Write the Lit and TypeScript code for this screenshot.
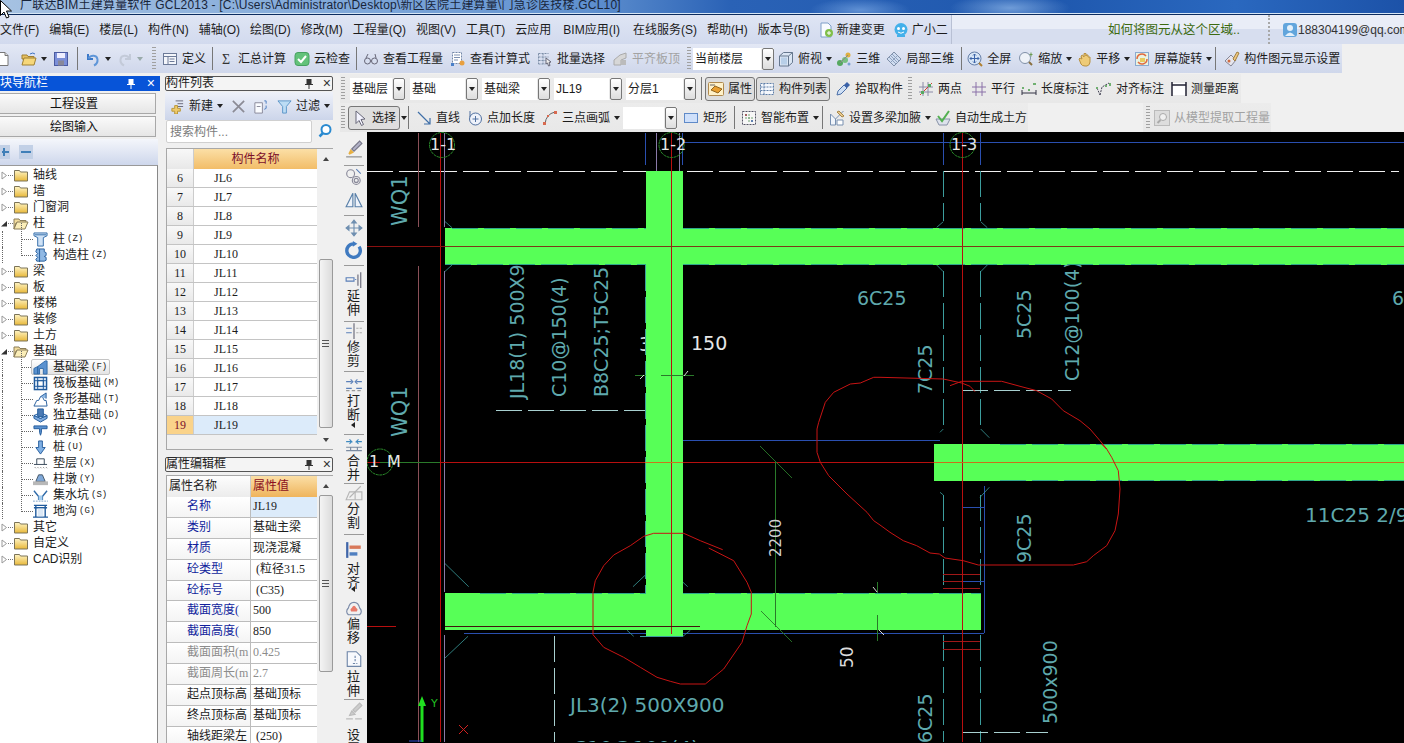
import { LitElement, html, css, svg } from "lit";
import { customElement } from "lit/decorators.js";

const I: Record<string, any> = {
  new: svg`<path d="M3 1.500h7l3 3v10H3z" fill="#fff" stroke="#777"/><path d="M10 1.500v3h3" fill="#ddd" stroke="#777"/>`,
  open: svg`<path d="M1 4h5l1 1.500h6V8H1z" fill="#e8c060" stroke="#a08030"/><path d="M1 14l2-7h12l-2 7z" fill="#f6d77a" stroke="#a08030"/><path d="M9 3q3-2 5 0" fill="none" stroke="#3a70c0"/>`,
  save: svg`<rect x="1.500" y="1.500" width="13" height="13" fill="#7b8fd8" stroke="#4a5aa0"/><rect x="4" y="2" width="8" height="5" fill="#eef"/><rect x="5" y="9.500" width="6" height="5" fill="#889"/>`,
  undo: svg`<path d="M3 3v5h5" fill="none" stroke="#3a78c8" stroke-width="2"/><path d="M3.500 7.500C6 3.500 12 4 12.500 8.500c.3 3-1.500 5-3.500 6" fill="none" stroke="#5f96d8" stroke-width="2"/>`,
  redo: svg`<path d="M13 3v5H8" fill="none" stroke="#c3cad8" stroke-width="2"/><path d="M12.500 7.500C10 3.500 4 4 3.500 8.500c-.3 3 1.500 5 3.500 6" fill="none" stroke="#c3cad8" stroke-width="2"/>`,
  def: svg`<rect x="1.500" y="2.500" width="13" height="11" fill="#f4f6fb" stroke="#6c7a98"/><path d="M1.500 5.500h13M6 5.500v8M7.500 8h5M7.500 10.500h5" stroke="#6c7a98" fill="none"/>`,
  sigma: svg`<text x="8" y="13" text-anchor="middle" font-size="14" font-family="Liberation Serif" fill="#333">Σ</text>`,
  cloud: svg`<rect x="1" y="1.500" width="14" height="13" rx="3" fill="#63c27a" stroke="#46a060"/><path d="M4 8l3 3 5-6" fill="none" stroke="#fff" stroke-width="2"/>`,
  glasses: svg`<circle cx="4.500" cy="10" r="3" fill="none" stroke="#667"/><circle cx="11.500" cy="10" r="3" fill="none" stroke="#667"/><path d="M7.500 10h1M3 7l2-4M13 7l-1-4" stroke="#667" fill="none"/>`,
  calc: svg`<rect x="2.500" y="1.500" width="9" height="11" fill="#fff" stroke="#7488a8" stroke-dasharray="2 1"/><path d="M4 4h6M4 6.500h6M4 9h4" stroke="#7c8fb0"/><rect x="1" y="12" width="3" height="3" fill="#4a80c8"/><circle cx="12" cy="12" r="2.500" fill="#e8a040"/>`,
  batch: svg`<path d="M1.500 2.500h10M1.500 6h10M1.500 9.500h7M1.500 13h7M1.500 2.500v10.500M6 2.500v10.500" stroke="#7d8fa8" fill="none" stroke-dasharray="2 1"/><path d="M9 7l5 4-2 .5 1 3-1.500.5-1-3-1.500 1z" fill="#eee" stroke="#667"/>`,
  flat: svg`<path d="M2 14V9l6-5 6-2v5l-5 2v5z" fill="#d7d7d7" stroke="#aaa"/><rect x="9" y="9" width="5" height="5" fill="#bbb"/>`,
  cube: svg`<path d="M1.500 5l4-3.500h9v10l-4 3.500h-9z" fill="#dbe6f4" stroke="#66788f"/><path d="M1.500 5h9v10M10.500 5l4-3.500" fill="none" stroke="#66788f"/><path d="M3 6.500h6v7H3z" fill="#b8cfe8"/>`,
  three: svg`<circle cx="12" cy="4" r="2.500" fill="#e0b040"/><circle cx="4" cy="12" r="3" fill="#56a860"/><circle cx="9" cy="9" r="3" fill="#78c080"/><path d="M4 12l8-8" stroke="#888"/><circle cx="13" cy="13" r="1.500" fill="#7aa0d0"/>`,
  part: svg`<path d="M8 1l7 7-7 7-7-7z" fill="#cfdcf0" stroke="#7f8fa8"/><path d="M4.500 4.500l7 7M11.500 4.500l-7 7M6 3l7 7M3 6l7 7" stroke="#8fa2bf" fill="none"/>`,
  full: svg`<circle cx="7.500" cy="7.500" r="6.500" fill="#d7e5f6" stroke="#667fa8"/><path d="M7.500 3v9M3 7.500h9" stroke="#3c64a8"/><path d="M6 4.500l1.500-1.500 1.500 1.500M6 10.500l1.500 1.500 1.500-1.500M4.500 6L3 7.500l1.500 1.500M10.500 6L12 7.500l-1.500 1.500" fill="none" stroke="#3c64a8"/><path d="M12 12l3 3" stroke="#b08030" stroke-width="2"/>`,
  zoom: svg`<circle cx="7" cy="7" r="5.500" fill="#eef2f8" stroke="#8090a8"/><path d="M11 11l3 3" stroke="#8a7040" stroke-width="2"/><path d="M13 1.500v4M11.500 3.500h3" stroke="#6a9a50"/>`,
  hand: svg`<path d="M3 8l2 5q1 2 4 2h2q3-1 3-4V6h-2V4h-2v1V2.500H8V6L6.500 4 5 5l1 3-2-1z" fill="#eecb78" stroke="#b89040"/>`,
  rot: svg`<rect x="1.500" y="1.500" width="13" height="13" fill="#eaf3e2" stroke="#8aaad0"/><path d="M3 8a5 5 0 0 1 9-3M13 8a5 5 0 0 1-9 3" fill="none" stroke="#e06a40" stroke-width="1.500"/><rect x="6" y="7" width="5" height="4" fill="#e8cc60"/>`,
  disp: svg`<path d="M1 10l6-6 5 5-5 6z" fill="#e6e6ee" stroke="#858595"/><path d="M9 8l4-7 2 1-4 8z" fill="#f0c880" stroke="#a07f40"/><circle cx="5" cy="10" r="1.500" fill="#d06a40"/>`,
  attr: svg`<rect x=".5" y="1.500" width="15" height="13" rx="1" fill="#fff1c8" stroke="#b08a50"/><path d="M3 9l4-4 7 3-4 4z" fill="#e89e30" stroke="#91641c"/><path d="M2 4h5" stroke="#666"/>`,
  list: svg`<path d="M1.500 2.500h13v11h-13zM5 2.500v11M1.500 6h13M1.500 9.500h13" fill="#f4f7fc" stroke="#5f7fa8" stroke-dasharray="2 1"/>`,
  pick: svg`<path d="M2 14l1-4 6-6 3 3-6 6z" fill="#cfe0f5" stroke="#4b6fa8"/><path d="M9 4l3-3 3 3-3 3z" fill="#3b62a8"/>`,
  two: svg`<path d="M1 6h14M1 11h14M5 1v14M10 1v14" stroke="#8a8aa8" fill="none"/><path d="M2 14L14 2" stroke="#d04030"/><rect x="3" y="10" width="3" height="3" fill="#58a860"/><rect x="10" y="3" width="3" height="3" fill="#58a860"/>`,
  par: svg`<path d="M1 6h14M1 11h14M5 1v14M11 1v14" stroke="#8a70a8" fill="none"/>`,
  len: svg`<path d="M1 9v5M15 9v5M1 12h14" fill="none" stroke="#334"/><rect x="1" y="6" width="2" height="2" fill="#70b070"/><rect x="7" y="8" width="2" height="2" fill="#70b070"/><rect x="12" y="2" width="3" height="2" fill="#70b070"/>`,
  ali: svg`<path d="M1 7l3 7M4 14l2-8 7-4" fill="none" stroke="#445" stroke-dasharray="2 1"/><rect x="0" y="6" width="2" height="2" fill="#70b070"/><rect x="13" y="2" width="2" height="3" fill="#70b070"/><rect x="9" y="4" width="2" height="2" fill="#70b070"/>`,
  mea: svg`<rect x="1" y="2" width="14" height="12" fill="#fff"/><path d="M1 1v14M15 1v14M1 4h14" fill="none" stroke="#223" stroke-width="1.500"/>`,
  cur: svg`<path d="M4 1l9 8-4 .5 2.500 5-2 1-2.500-5-3 3z" fill="#f4f4ff" stroke="#667"/>`,
  line: svg`<path d="M2 2l12 12M14 8v6H8" fill="none" stroke="#3f6fa8" stroke-width="1.200"/>`,
  pt: svg`<circle cx="8.500" cy="9" r="6" fill="#eef2fa" stroke="#5070a0"/><path d="M8.500 6v6M5.500 9h6" stroke="#5070a0"/><path d="M3 1v6" stroke="#5070a0"/>`,
  arc: svg`<path d="M3 14Q4 4 13 2" fill="none" stroke="#666"/><rect x="1" y="12" width="3" height="3" fill="#d86a50"/><rect x="12" y="1" width="3" height="3" fill="#d86a50"/><rect x="5" y="5" width="2" height="2" fill="#d86a50"/>`,
  rect: svg`<rect x="1.500" y="3.500" width="13" height="9" fill="#cfe0fa" stroke="#5f8ac8"/>`,
  smart: svg`<rect x="1.500" y="1.500" width="13" height="13" fill="#f7f7f7" stroke="#556" stroke-dasharray="2 1"/><path d="M8 4v8M4 8h8" stroke="#70a070" stroke-dasharray="2 1"/><rect x="4" y="4" width="2" height="2" fill="#a06060"/><rect x="10" y="10" width="2" height="2" fill="#6080b0"/>`,
  haunch: svg`<path d="M1.500 4l5 5v6H1.500zM14.500 1l-8 8" fill="#f0f4fa" stroke="#7890b0"/><path d="M8 10h6v5H8z" fill="#fff" stroke="#7890b0"/><path d="M10 1l5 5-2 1-5-5z" fill="#e8c890" stroke="#a88848"/>`,
  auto: svg`<path d="M1 9h14l-3 6H4z" fill="#dde2ec" stroke="#8892a8"/><path d="M3 6l4 5 7-10" fill="none" stroke="#52b050" stroke-width="2"/>`,
  model: svg`<rect x=".5" y=".5" width="15" height="15" fill="#ddd" stroke="#bbb"/><circle cx="9" cy="7" r="3.500" fill="#f0f0f0" stroke="#aaa"/><path d="M6.500 10l-3 3" stroke="#aaa" stroke-width="2"/>`,
  change: svg`<path d="M3 1h7l3 3v11H3z" fill="#f8fbff" stroke="#7f9fc8"/><circle cx="11" cy="11" r="4" fill="#80bf4a"/><path d="M9 11h4M11 9v4" stroke="#fff"/>`,
  ai: svg`<circle cx="8" cy="7.500" r="6.500" fill="#43b0ea"/><circle cx="5.500" cy="6.500" r="1.500" fill="#fff"/><circle cx="10.500" cy="6.500" r="1.500" fill="#fff"/><path d="M5 10q3 2.500 6 0" stroke="#fff" fill="none"/><path d="M4 14h8" stroke="#43b0ea" stroke-width="2"/>`,
  user: svg`<rect x="1" y="1" width="14" height="14" rx="3" fill="#62a5dc"/><circle cx="8" cy="6" r="3" fill="#e4f0fa"/><path d="M3 14q5-7 10 0z" fill="#e4f0fa"/>`,
  lnew: svg`<path d="M6 2h8M8 5h6M8 8h6" stroke="#667" fill="none"/><path d="M2 10h3V7h3v3h3v3H8v3H5v-3H2z" fill="#efca6a" stroke="#b79436"/>`,
  lx: svg`<path d="M2 2l12 12M14 2L2 14" stroke="#8b8b95" stroke-width="1.800"/>`,
  lcopy: svg`<path d="M2 4h8v11H2z" fill="#fafcff" stroke="#889"/><path d="M12 2h2v3M14 7v3l-2 1" fill="none" stroke="#4a7cc0"/><path d="M4 8h4" stroke="#889"/>`,
  filter: svg`<path d="M1 2h14l-5 6v7H6V8z" fill="#bcdcf4" stroke="#5a94c8"/>`,
  mag: svg`<circle cx="9" cy="6.500" r="4.500" fill="#fff" stroke="#2a8ad0" stroke-width="2"/><path d="M6 10l-3.500 3.500" stroke="#2a8ad0" stroke-width="2.500"/>`,
  brush: svg`<path d="M1 15h14" stroke="#888"/><path d="M3 12l2-4 3 3-4 2z" fill="#e8b040"/><path d="M6 8l7-7 2 2-7 7z" fill="#b3b3c8" stroke="#778"/>`,
  circ: svg`<circle cx="5" cy="5" r="3.500" fill="none" stroke="#8a8a9a"/><circle cx="10" cy="11" r="3.500" fill="none" stroke="#8a8a9a"/><circle cx="10" cy="11" r="1.800" fill="none" stroke="#8a8a9a"/><path d="M10 1l4 4" stroke="#5a7fb8"/>`,
  mir: svg`<path d="M7 2L1 14h6zM9 2l6 12H9z" fill="#eef3fa" stroke="#587fa8"/>`,
  move: svg`<path d="M8 1v14M1 8h14M8 1L6 3.500h4zM8 15l-2-2.500h4zM1 8l2.500-2v4zM15 8l-2.500-2v4z" fill="#6f8fb0" stroke="#6f8fb0"/>`,
  rota: svg`<path d="M12.500 5a6 6 0 1 1-5-2.500" fill="none" stroke="#3f7ac0" stroke-width="3"/><path d="M7 0v5l4-2.500z" fill="#3f7ac0"/>`,
  ext: svg`<path d="M14 1v14M11.500 3v10" stroke="#667" fill="none"/><path d="M1 6h7v3H1z" fill="none" stroke="#5a7fb8"/><path d="M9 7.500h2" stroke="#5a7fb8" stroke-dasharray="1 1"/>`,
  trim: svg`<path d="M8 1v14" stroke="#667"/><path d="M1 5.500h5M1 9.500h5" stroke="#5a7fb8"/><path d="M10 5.500h5M10 9.500h5" stroke="#aaa" stroke-dasharray="2 1"/>`,
  brk: svg`<path d="M1 5h5M10 5h5" stroke="#5a7fb8"/><path d="M1 11h5M10 11h5" stroke="#5a7fb8"/><path d="M5 3l2 2-2 2M11 3L9 5l2 2" fill="none" stroke="#5a7fb8"/><path d="M1 13h14" stroke="#999" stroke-dasharray="3 2"/>`,
  mer: svg`<path d="M1 5h5l-2-2M4 7l2-2M15 5h-5l2-2M12 7l-2-2" fill="none" stroke="#3f8ac0"/><path d="M1 10h14M1 13h14M5 10v3M11 10v3" stroke="#7a8aa0"/>`,
  spl: svg`<path d="M1 14l3-7h11v7z" fill="none" stroke="#b5b5b5"/><path d="M4 12L14 2" stroke="#b5b5b5"/><path d="M9 7v7" stroke="#b5b5b5"/>`,
  alg: svg`<path d="M2 1v14" stroke="#3f65a8" stroke-width="2"/><path d="M4 4h10v3H4z" fill="#d8785a"/><path d="M4 10h7v3H4z" fill="#4f7fc0"/>`,
  off: svg`<path d="M3 14q-3-3 0-6 1-5 5-5t5 5q3 3 0 6z" fill="none" stroke="#7a8aa8"/><path d="M5.500 11q-1.500-2 .5-3 1-2 2-2t2 2q2 1 .5 3z" fill="#e87a6a"/>`,
  str: svg`<path d="M2 1.500h8l4 4v9H2z" fill="#f7f9fd" stroke="#6f86a8"/><path d="M7 12h4M9 5v6" stroke="#6f86a8" stroke-dasharray="2 1"/>`,
  setg: svg`<path d="M1 15h6M9 15h6" stroke="#bbb"/><path d="M4 12l2-4 3 3zM7 7l6-6 2 2-6 6z" fill="#ccc" stroke="#bbb"/>`,
  tz: svg`<path d="M1 1h14v3l-4 2v9H5V6L1 4z" fill="#cfe2f6" stroke="#2f6aa8"/><path d="M2 3h12" stroke="#2f6aa8"/>`,
  tg: svg`<path d="M4 1h8v3l2 1v3l-2 1 2 1v3l-2 1H4l-1-2 2-2-2-2 2-2-2-2z" fill="#8fb8e4" stroke="#245c9c"/><path d="M7 1v14" stroke="#245c9c"/>`,
  tb: svg`<path d="M1 15V9l4-2v8zM5 15V7L13 1h2v14h-4V9H7v6z" fill="#5b92d0" stroke="#2f6aa8"/>`,
  tf: svg`<rect x="1.500" y="1.500" width="13" height="13" fill="#dbe8f6" stroke="#1f5a9c" stroke-width="1.500"/><rect x="5" y="5" width="6" height="6" fill="#fff" stroke="#1f5a9c"/><path d="M5 1.500v13M11 1.500v13M1.500 5h13M1.500 11h13" stroke="#1f5a9c"/>`,
  tt: svg`<path d="M1 15l3-6h2l2-4h2l2 4h2l1 6z" fill="#fff" stroke="#245c9c"/><path d="M8 5L14 1v6" fill="#8fb8e4" stroke="#245c9c"/>`,
  td: svg`<path d="M1 8l7 3 7-3v3l-7 4-7-4z" fill="#7eaade" stroke="#1f5a9c"/><path d="M1 8l7-3 7 3-7 3z" fill="#d8e8f8" stroke="#1f5a9c"/><path d="M5 1h6v8H5z" fill="#4a7ab4" stroke="#1f5a9c"/>`,
  tc: svg`<path d="M1 2h14v3H9v4l-1 3-1-3V5H1z" fill="#5a92d0" stroke="#245c9c"/>`,
  tu: svg`<path d="M6 1h4v7h3l-5 7-5-7h3z" fill="#7fb0e4" stroke="#245c9c"/>`,
  tx: svg`<path d="M4 9V3h8v6M1 9h14" fill="#fff" stroke="#345"/><path d="M2 12l1 1M5 12l1 1M8 12l1 1M11 12l1 1M14 12l1 1" stroke="#666"/>`,
  ty: svg`<path d="M6 3h4l3 7H3z" fill="#7fa8d8" stroke="#456"/><rect x="0" y="10" width="16" height="4" fill="#b8b8b8"/>`,
  ts: svg`<path d="M1 3l5 6v3h4V9l5-6" fill="none" stroke="#2f6aa8" stroke-width="1.500"/><rect x="6" y="8" width="4" height="5" fill="#a8cff0"/><path d="M0 14h16" stroke="#7aa0c8" stroke-dasharray="2 1"/>`,
  tdg: svg`<path d="M1 1.500h14M3 1.500v12M13 1.500v12M0 14h16M1 4h14" stroke="#1f5a9c" fill="none" stroke-width="1.500"/><rect x="5" y="5" width="6" height="8" fill="#dbe8f6"/>`,
};

const ic = (n: string) => html`<svg class="ic" viewBox="0 0 16 16">${I[n]}</svg>`;

type It = { k?: string; i?: string; l?: string; a?: boolean; g?: boolean; m?: number; w?: number; on?: boolean };

const rowA: It[] = [
  { i: "new", m: -5 }, { i: "open", m: 10, a: true }, { i: "save", m: 6 }, { k: "sep", m: 8 },
  { i: "undo", m: 7, a: true }, { i: "redo", m: 6, g: true, a: true },
];
const rowB: It[] = [
  { k: "grip", m: 0 }, { i: "def", l: "定义", m: 6 }, { k: "sep", m: 6 }, { i: "sigma", l: "汇总计算", m: 5 },
  { i: "cloud", l: "云检查", m: 8 }, { k: "sep", m: 6 }, { i: "glasses", l: "查看工程量", m: 6 },
  { i: "calc", l: "查看计算式", m: 7 }, { i: "batch", l: "批量选择", m: 7 }, { i: "flat", l: "平齐板顶", m: 7, g: true },
  { k: "grip", m: 7 }, { k: "combo", l: "当前楼层", m: 2, w: 81 }, { i: "cube", l: "俯视", m: 4, a: true },
  { i: "three", l: "三维", m: 4 }, { i: "part", l: "局部三维", m: 6 }, { k: "sep", m: 7 },
  { i: "full", l: "全屏", m: 5 }, { i: "zoom", l: "缩放", m: 7, a: true }, { i: "hand", l: "平移", m: 4, a: true },
  { i: "rot", l: "屏幕旋转", m: 4, a: true }, { k: "sep", m: 3 }, { i: "disp", l: "构件图元显示设置", m: 8 },
];
const row2: It[] = [
  { k: "grip", m: 1 }, { k: "combo", l: "基础层", m: 5, w: 55 }, { k: "combo", l: "基础", m: 5, w: 68 },
  { k: "combo", l: "基础梁", m: 4, w: 68 }, { k: "combo", l: "JL19", m: 4, w: 68 }, { k: "combo", l: "分层1", m: 4, w: 70 },
  { k: "sep", m: 5 }, { i: "attr", l: "属性", m: 3, on: true }, { i: "list", l: "构件列表", m: 1, on: true },
  { i: "pick", l: "拾取构件", m: 5 }, { k: "grip", m: 5 }, { i: "two", l: "两点", m: 6 }, { i: "par", l: "平行", m: 9 },
  { i: "len", l: "长度标注", m: 6 }, { i: "ali", l: "对齐标注", m: 7 }, { i: "mea", l: "测量距离", m: 7 },
];
const row3: It[] = [
  { k: "grip", m: 1 }, { i: "cur", l: "选择", m: 3, on: true }, { k: "arrow", m: 1 }, { k: "sep", m: 1 },
  { i: "line", l: "直线", m: 7 }, { i: "pt", l: "点加长度", m: 7 }, { i: "arc", l: "三点画弧", m: 7, a: true },
  { k: "combo", l: "", m: 3, w: 54 }, { i: "rect", l: "矩形", m: 6 }, { k: "sep", m: 7 },
  { i: "smart", l: "智能布置", m: 6, a: true }, { k: "sep", m: 3 }, { i: "haunch", l: "设置多梁加腋", m: 6, a: true },
  { i: "auto", l: "自动生成土方", m: 4 },
];

const menus = ["文件(F)", "编辑(E)", "楼层(L)", "构件(N)", "辅轴(O)", "绘图(D)", "修改(M)", "工程量(Q)", "视图(V)", "工具(T)", "云应用", "BIM应用(I)", "在线服务(S)", "帮助(H)", "版本号(B)"];

type T = { l: string; hk?: string; i?: string; open?: boolean; on?: boolean };
const tree: T[] = [
  { l: "轴线" }, { l: "墙" }, { l: "门窗洞" }, { l: "柱", open: true },
  { l: "柱", hk: "(Z)", i: "tz" }, { l: "构造柱", hk: "(Z)", i: "tg" },
  { l: "梁" }, { l: "板" }, { l: "楼梯" }, { l: "装修" }, { l: "土方" }, { l: "基础", open: true },
  { l: "基础梁", hk: "(F)", i: "tb", on: true }, { l: "筏板基础", hk: "(M)", i: "tf" }, { l: "条形基础", hk: "(T)", i: "tt" },
  { l: "独立基础", hk: "(D)", i: "td" }, { l: "桩承台", hk: "(V)", i: "tc" }, { l: "桩", hk: "(U)", i: "tu" },
  { l: "垫层", hk: "(X)", i: "tx" }, { l: "柱墩", hk: "(Y)", i: "ty" }, { l: "集水坑", hk: "(S)", i: "ts" }, { l: "地沟", hk: "(G)", i: "tdg" },
  { l: "其它" }, { l: "自定义" }, { l: "CAD识别" },
];

const rowsList = [6, 7, 8, 9, 10, 11, 12, 13, 14, 15, 16, 17, 18, 19];
const props: [string, string, string][] = [
  ["名称", "JL19", "b"], ["类别", "基础主梁", "b"], ["材质", "现浇混凝", "b"], ["砼类型", " (粒径31.5", "b"], ["砼标号", " (C35)", "b"],
  ["截面宽度(", "500", "b"], ["截面高度(", "850", "b"], ["截面面积(m", "0.425", "g"], ["截面周长(m", "2.7", "g"],
  ["起点顶标高", "基础顶标", "k"], ["终点顶标高", "基础顶标", "k"], ["轴线距梁左", " (250)", "k"],
];

type S = { m: number; i?: string; t?: string; tm?: number; arrow?: boolean; am?: number };
const strip: S[] = [
  { m: 8, i: "brush" }, { m: 7 }, { m: 2, i: "circ" }, { m: 5, i: "mir" }, { m: 6 }, { m: 3, i: "move" }, { m: 4, i: "rota" }, { m: 6 },
  { m: 5, i: "ext", t: "延伸" }, { m: 4 }, { m: 0, i: "trim", t: "修剪" }, { m: 3 }, { m: 4, i: "brk", t: "打断", arrow: true }, { m: 6 },
  { m: 1, i: "mer", t: "合并" }, { m: 1 }, { m: 0, i: "spl", t: "分割" }, { m: 4 }, { m: 6, i: "alg", t: "对齐", tm: 3, arrow: true, am: -4 },
  { m: 7, i: "off", t: "偏移" }, { m: 5, i: "str", t: "拉伸", tm: 2 }, { m: 1 }, { m: 2, i: "setg", t: "设置", tm: 8 },
];

const hl = (y: number, a: number, b: number, c: string, d?: string) => svg`<line x1=${a} x2=${b} y1=${y} y2=${y} stroke=${c} stroke-dasharray=${d || "none"}/>`;
const vl = (x: number, a: number, b: number, c: string, d?: string) => svg`<line x1=${x} x2=${x} y1=${a} y2=${b} stroke=${c} stroke-dasharray=${d || "none"}/>`;
const seg = (a: number, b: number, c: number, d: number, col = "#3a9a9a") => svg`<line x1=${a} y1=${b} x2=${c} y2=${d} stroke=${col}/>`;
const vt = (s: string, x: number, y: number, size = 19, fill = "#5fa9ad") => svg`<text transform="translate(${x},${y}) rotate(-90)" font-size=${size} fill=${fill}>${s}</text>`;
const ht = (s: string, x: number, y: number, size = 19, fill = "#5fa9ad") => svg`<text x=${x} y=${y} font-size=${size} fill=${fill}>${s}</text>`;

const map = (ox: number, oy: number, a: number[][]) => a.map(([x, y]) => `${(ox + x / 3).toFixed(1)},${(oy + y / 3).toFixed(1)}`);
const redA = [
  ...map(367, 430, [[1067, 362], [1000, 335], [950, 313], [860, 313], [830, 322], [790, 350], [740, 378], [710, 410], [685, 455], [678, 490], [678, 617], [710, 655], [770, 685], [820, 715], [870, 745], [910, 757], [940, 765], [1015, 765], [1070, 720], [1125, 640], [1140, 590], [1153, 555], [1153, 490], [1140, 460], [1100, 395], [1025, 357]]),
].join(" ");
const redB = [
  ...map(880, 130, [[210, 770], [245, 757], [365, 757], [420, 772], [470, 785], [515, 810], [550, 845], [600, 875], [630, 900], [660, 935], [680, 960]]),
  ...map(880, 430, [[665, 45], [680, 60], [695, 85], [715, 125], [720, 180], [715, 255], [705, 305], [680, 350], [640, 380], [620, 398], [580, 408], [295, 408], [250, 395], [195, 387], [178, 375], [150, 372], [110, 350], [70, 335], [30, 310], [0, 288]]),
  ...map(367, 430, [[1520, 275], [1500, 250], [1440, 195], [1385, 140], [1360, 100], [1350, 70], [1350, 0]]),
  ...map(367, 130, [[1355, 880], [1375, 820], [1400, 790], [1450, 765], [1480, 762], [1520, 745]]),
  ...map(880, 130, [[0, 745], [190, 750], [245, 762], [270, 772], [285, 788]]),
].join(" ");

const TEAL = "#3c9d9d", D = "26 6", BL = "#2a4fb0", RD = "#b80f0f", PV = "#8a7aa8", PR = "#8a5058", GD = "#2a7a2a";

@customElement("app-root")
export class AppRoot extends LitElement {
  static styles = css`
    :host { display: block; width: 1404px; height: 743px; overflow: hidden; position: relative; background: #f0f0f0; color: #1c1c1c;
      font: 12px/16px "Liberation Sans", "Noto Sans CJK SC", sans-serif; }
    * { box-sizing: border-box; }
    .ic { width: 16px; height: 16px; flex: none; display: block; }
    .title { height: 15px; overflow: hidden; padding-left: 20px; line-height: 10px; white-space: nowrap; color: #18253a; letter-spacing: .2px;
      border-bottom: 1px solid #0c2c60; box-shadow: inset 0 -1px 0 #d6e6f6;
      background: radial-gradient(ellipse 60px 14px at 1010px 8px, #6f9cd8, transparent), radial-gradient(ellipse 50px 12px at 860px 10px, #5f90d4, transparent), linear-gradient(90deg, #a6c2e2, #7aa4d8 28%, #5f90cf 42%, #2a62b6 52%, #1f58ae 75%, #2a68bf 88%, #1c52a8); }
    .cursor { position: absolute; left: 0; top: 0; width: 12px; height: 20px; }
    .menu { height: 29px; display: flex; background: linear-gradient(#dfe5f4, #d2daee); }
    .mleft { width: 952px; display: flex; align-items: center; gap: 10px; border-right: 1px solid #b8c0d4; padding-top: 1px; }
    .mi { display: flex; align-items: center; gap: 3px; white-space: nowrap; }
    .mi:nth-child(12) { margin-left: 2px; }
    .mi:nth-child(13) { margin-left: 3px; }
    .mi:nth-child(16) { margin-left: -2px; }
    .mi.x { margin-left: -2px; }
    .mtip { width: 318px; color: #3c6a10; padding: 7px 0 0 156px; background: linear-gradient(#e9edf7 50%, #d7deef 50%); border-right: 2px dotted #a8a8a8; white-space: nowrap; font-size: 12.5px; }
    .muser { flex: 1; display: flex; align-items: center; gap: 0; padding-left: 12px; white-space: nowrap; overflow: hidden; background: linear-gradient(#e9edf7 50%, #d7deef 50%); }
    .muser .t { color: #333; }
    .row { display: flex; align-items: center; height: 29px; white-space: nowrap; }
    .r1 { width: 1342px; background: linear-gradient(#e3e8f5, #cfd7eb); }
    .ga { width: 150px; margin-right: 2px; height: 100%; display: flex; align-items: center; flex: none; }
    .gb { flex: 1; height: 100%; display: flex; align-items: center; }
    .b { display: flex; align-items: center; gap: 4px; flex: none; }
    .b.g { color: #a2a2a2; }
    .b.g .ar { border-top-color: #9aa; }
    .b.on { height: 24px; padding: 0 2px; border: 1px solid #767676; border-radius: 3px; background: #dedede; }
    .r3 .b.on { padding: 0 3px; }
    .ar { width: 0; height: 0; border: 3px solid transparent; border-top: 4px solid #222; border-bottom: 0; flex: none; }
    .sep { width: 1px; height: 23px; background: #777; flex: none; }
    .grip { width: 4px; height: 23px; flex: none; background: repeating-linear-gradient(#a0a0a0 0 1px, transparent 1px 3px); }
    .combo { height: 22px; display: flex; background: #fff; flex: none; align-items: center; padding-left: 2px; overflow: hidden; justify-content: space-between; }
    .dd { width: 12px; height: 22px; border: 1px solid #777; border-radius: 2px; background: linear-gradient(#fff, #ddd); display: flex; align-items: center; justify-content: center; flex: none; box-shadow: -1px 0 0 #e8e8e8; }
    .main { display: flex; height: 670px; }
    .nav { width: 160px; margin-right: 5px; flex: none; padding-top: 3px; overflow: hidden; display: flex; flex-direction: column; }
    .nh { height: 15px; background: #0754d8; color: #fff; display: flex; align-items: center; justify-content: space-between; padding-right: 5px; line-height: 15px; }
    .pin { display: flex; gap: 12px; align-items: center; font-size: 14px; font-weight: 300; }
    .pin svg { width: 8px; height: 10px; }
    .nb { height: 21px; margin: 2px 4px 0 -8px; border: 1px solid #a8a8a8; background: linear-gradient(#fafafa, #e6e6e6); text-align: center; line-height: 21px; color: #111; }
    .nt { height: 26px; margin: 2px 2px 0 0; background: linear-gradient(#f4f6fb, #ced7ec); display: flex; align-items: center; gap: 9px; padding-left: 0; }
    .nt span { height: 14px; background: #c2d0e6; position: relative; flex: none; }
    .nt .p { width: 10px; }
    .nt .mn { width: 14px; }
    .nt .p::before, .nt .mn::before { content: ""; position: absolute; left: 2px; right: 1px; top: 6px; height: 2px; background: #3f7fb8; }
    .nt .mn::before { left: 2px; right: 2px; }
    .nt .p::after { content: ""; position: absolute; left: 3px; top: 3px; height: 8px; width: 2px; background: #3f7fb8; }
    .tree { flex: 1; margin-right: 2px; background: #fff; border-right: 1px solid #888; border-top: 1px solid #999; padding-top: 1px; }
    .tr { height: 16px; display: flex; align-items: center; position: relative; white-space: nowrap; }
    .tog { width: 13px; flex: none; display: flex; padding-left: 1px; }
    .tog svg { width: 7px; height: 9px; }
    .fo { width: 16px; height: 13px; flex: none; margin-right: 4px; }
    .root::before { content: ""; position: absolute; left: 8px; width: 5px; top: 8px; border-top: 1px dotted #777; }
    .ch { padding-left: 33px; }
    .ch::before { content: ""; position: absolute; left: 21px; width: 11px; top: -8px; height: 16px; border-left: 1px dotted #666; border-bottom: 1px dotted #666; }
    .ch::after { content: ""; position: absolute; left: 2px; top: 0; height: 16px; border-left: 1px dotted #666; }
    .ch .ic { width: 15px; height: 15px; margin-right: 5px; position: relative; z-index: 1; }
    .ch.on .lb { position: relative; z-index: 1; }
    .hlbox { position: absolute; left: 31px; top: 0; width: 79px; height: 16px; border: 1px solid #c4c4c4; border-radius: 2px; background: linear-gradient(#fff, #e4e4e4); }
    .hk { font: 9px/14px "Liberation Mono", monospace; margin-left: 2px; }
    .lp { width: 170px; flex: none; padding-top: 3px; display: flex; flex-direction: column; overflow: hidden; margin-right: 5px; }
    .lp > * { flex: none; }
    .ph { height: 15px; border: 1px solid #555; border-radius: 2px; display: flex; align-items: center; justify-content: space-between; padding: 0 1px 0 0; width: 168px; line-height: 13px; background: #f4f4f4; }
    .ph .pin { color: #333; gap: 10px; }
    .lt { height: 28px; width: 168px; margin-top: 1px; background: linear-gradient(#eef1f9, #ccd5ea); display: flex; align-items: center; padding-left: 5px; }
    .lt .ic { width: 15px; height: 15px; }
    .srch { height: 28px; display: flex; align-items: flex-start; width: 168px; }
    .srch .in { width: 146px; margin-left: 1px; height: 23px; background: #fff; border: 1px solid #d0d0d0; border-radius: 2px; color: #7c7c7c; padding: 3px 0 0 3px; }
    .srch .ic { margin: 3px 0 0 5px; }
    .grid { display: flex; margin-left: 1px; width: 167px; border: 1px solid #a8a8a8; background: #f0f0f0; font-family: "Liberation Serif", "Noto Sans CJK SC", serif; }
    .tbl { width: 150px; flex: none; }
    .lg { height: 302px; }
    .lh { height: 20px; display: flex; }
    .corner { width: 27px; background: linear-gradient(#f8f8f8, #e8e8e8); flex: none; border-right: 1px solid #ccc; }
    .hname { flex: 1; background: linear-gradient(#fbdfa6, #f2bd68); color: #7c0f2a; text-align: center; line-height: 20px; font-family: "Liberation Sans", "Noto Sans CJK SC", sans-serif; }
    .lr { height: 19px; display: flex; line-height: 18px; border-bottom: 1px solid #c4c4c4; background: #fff; }
    .idx { width: 27px; flex: none; background: linear-gradient(#f8f8f8, #e9e9e9); border-right: 1px solid #ccc; text-align: center; }
    .nm { padding-left: 20px; flex: 1; }
    .lr.sel { background: #dcebfa; }
    .lr.sel .idx { background: #fad38a; color: #7c0f2a; }
    .sb { width: 15px; margin-left: 1px; display: flex; flex-direction: column; align-items: center; background: #f0f0f0; flex: none; position: relative; }
    .up, .down { height: 19px; flex: none; display: flex; align-items: center; justify-content: center; }
    .up::before { content: ""; border: 3px solid transparent; border-bottom: 4px solid #444; border-top: 0; }
    .down::before { content: ""; border: 3px solid transparent; border-top: 4px solid #444; border-bottom: 0; }
    .thumb { width: 14px; border: 1px solid #9a9a9a; border-radius: 2px; background: linear-gradient(90deg, #f4f4f4, #dcdcdc); display: flex; align-items: center; justify-content: center; flex: none; }
    .thumb::before { content: ""; width: 7px; height: 7px; background: repeating-linear-gradient(#555 0 1px, transparent 1px 3px); }
    .th1 { height: 169px; margin-top: 91px; }
    .th2 { height: 177px; }
    .spacer { flex: 1; }
    .ph2 { margin-top: 7px; }
    .pg { margin-top: 3px; height: 280px; }
    .ph3 { height: 21px; display: flex; font-family: "Liberation Sans", "Noto Sans CJK SC", sans-serif; }
    .pn { width: 84px; padding-left: 2px; flex: none; background: linear-gradient(#fdfdfd, #ececec); border-right: 1px solid #ccc; line-height: 21px; }
    .pv { flex: 1; background: linear-gradient(#fbdfa6, #efb45c); color: #8c1020; line-height: 21px; padding-left: 2px; }
    .prow { height: 20.9px; display: flex; border-bottom: 1px solid #bcbcbc; background: #fff; line-height: 19px; }
    .prow .a { width: 84px; flex: none; padding-left: 20px; border-right: 1px solid #bcbcbc; white-space: nowrap; overflow: hidden; background: linear-gradient(#fff, #f4f4f4); }
    .prow .v { flex: 1; padding-left: 2px; white-space: pre; overflow: hidden; }
    .prow.b2 .a { color: #101e9c; }
    .prow.g2 .a, .prow.g2 .v { color: #8c8c8c; }
    .prow.first .v { background: #dcebfa; }
    .right { flex: 1; display: flex; flex-direction: column; min-width: 0; }
    .r2 { margin-top: 1px; }
    .r2 .tb, .r3 .tb { height: 100%; display: flex; align-items: center; background: linear-gradient(#ececec, #e8e8e8); }
    .r2 .tb { width: 901px; }
    .r3 .tb { width: 688px; }
    .r3 .tb2 { width: 128px; margin-left: 115px; padding-left: 3px; }
    .canvas { flex: 1; display: flex; min-height: 0; }
    .strip { width: 27px; flex: none; display: flex; flex-direction: column; align-items: center; overflow: hidden; }
    .sline { height: 1px; width: 20px; background: #9a9a9a; flex: none; }
    .sitem { display: flex; flex-direction: column; align-items: center; flex: none; }
    .sitem .ic { height: 18px; width: 18px; }
    .vtxt { width: 13px; line-height: 14px; text-align: center; font-size: 13px; }
    .sar { width: 0; height: 0; border: 3px solid transparent; border-right: 4px solid #222; border-left: 0; margin: 0 0 0 -1px; }
    .cv { flex: 1; min-width: 0; background: #000; display: block; }
    .cv svg { display: block; }
    .cv text { font-family: "DejaVu Sans", sans-serif; }
  `;

  private item(x: It) {
    const m = `margin-left:${x.m ?? 0}px`;
    if (x.k === "sep") return html`<div class="sep" style=${m}></div>`;
    if (x.k === "arrow") return html`<div class="ar" style=${m}></div>`;
    if (x.k === "grip") return html`<div class="grip" style=${m}></div>`;
    if (x.k === "combo")
      return html`<div class="combo" style="${m};width:${x.w}px"><span>${x.l}</span><span class="dd"><span class="ar"></span></span></div>`;
    return html`<div class="b ${x.g ? "g" : ""} ${x.on ? "on" : ""}" style=${m}>
      ${ic(x.i!)}${x.l ? html`<span>${x.l}</span>` : ""}${x.a ? html`<span class="ar"></span>` : ""}
    </div>`;
  }

  private pin() {
    return html`<span class="pin"><svg viewBox="0 0 8 10"><path d="M1.500 0h5v5H8v1H4.500v4h-1V6H0V5h1.500z" fill="currentColor"/></svg><span>×</span></span>`;
  }

  private folder(open?: boolean) {
    return open
      ? html`<svg class="fo" viewBox="0 0 16 13"><path d="M1 2h5l1 1.500h6V6H3L1 12z" fill="#f2dc9c" stroke="#8a7d58"/><path d="M1 12l3-7h11l-3 7z" fill="#fbeeb8" stroke="#8a7d58"/></svg>`
      : html`<svg class="fo" viewBox="0 0 16 13"><defs><linearGradient id="fg" x1="0" y1="0" x2="0" y2="1"><stop offset="0" stop-color="#fff4c4"/><stop offset="1" stop-color="#e8b83a"/></linearGradient></defs><path d="M1.500 1.500h5l1 1.500h7v9h-13z" fill="url(#fg)" stroke="#7c7458"/></svg>`;
  }

  private treeRow(t: T) {
    if (t.i)
      return html`<div class="tr ch ${t.on ? "on" : ""}">
        ${t.on ? html`<div class="hlbox"></div>` : ""}${ic(t.i)}<span class="lb">${t.l}</span><span class="hk lb">${t.hk}</span>
      </div>`;
    return html`<div class="tr root">
      <span class="tog"><svg viewBox="0 0 7 9">${t.open ? svg`<path d="M0 7.500L6 2v5.500z" fill="#333"/>` : svg`<path d="M1 1l4.500 3.500L1 8z" fill="#fff" stroke="#999"/>`}</svg></span>
      ${this.folder(t.open)}<span>${t.l}</span>
    </div>`;
  }

  private canvas() {
    return html`<svg width="1037" height="610" viewBox="367 133 1037 610">
      ${ht("JL3(2) 500X900", 570, 713, 20)}${ht("C10@100(4)", 573, 756, 20)}${ht("11C25 2/9", 1305, 523, 20)}
      ${ht("6C25", 857, 306)}${ht("6", 1392, 306)}
      ${vt("WQ1", 407, 227, 21)}${vt("WQ1", 407, 438, 21)}
      ${vt("JL18(1) 500X900", 524, 400)}${vt("C10@150(4)", 566, 398)}${vt("B8C25;T5C25", 608, 398)}
      ${vt("7C25", 932, 395)}${vt("5C25", 1031, 340)}${vt("C12@100(4)", 1079, 382)}${vt("9C25", 1031, 564)}${vt("500x900", 1057, 725)}${vt("6C25", 932, 744)}
      ${ht("350", 639, 352, 19, "#ddd")}
      <g shape-rendering="crispEdges" fill="none">
        ${hl(172.5, 367, 1399, "#f0f0f0", D)}
        ${hl(143.5, 682, 1404, BL)}${hl(441.5, 683, 940, BL)}
        ${vl(418.5, 134, 228, PR)}${vl(418.5, 267, 743, PR)}
        ${vl(444.5, 134, 228, PV)}${vl(444.5, 272, 593, PV)}${vl(444.5, 636, 743, PV)}
        ${vl(645.5, 134, 166, BL)}${vl(682.5, 134, 166, BL)}${vl(656.5, 134, 172, PV)}${vl(679.5, 134, 172, PV)}
        ${vl(943.5, 134, 166, BL)}${vl(980.5, 134, 166, BL)}
        ${[[172, 222], [272, 430], [496, 590], [636, 743]].map(([a, b]) => svg`${vl(943.5, a, b, TEAL, D)}${vl(980.5, a, b, TEAL, D)}`)}
        ${hl(411.5, 496, 646, "#a8d0d0", D)}${hl(391.5, 962, 1071, "#a8d0d0", D)}${hl(733.5, 962, 1048, "#a8d0d0", D)}
        ${vl(554.5, 637, 743, "#a8d0d0", D)}
        ${hl(575.5, 943, 980, "#a01818")}${hl(582.5, 943, 962, "#a01818")}${hl(589.5, 943, 980, "#a01818")}${hl(642.5, 943, 980, "#a01818")}${hl(650.5, 943, 980, "#a01818")}
        ${hl(582.5, 962, 984, BL)}${hl(508.5, 962, 984, BL)}${vl(984.5, 487, 634, BL)}${hl(634.5, 464, 984, BL)}
      </g>
      <g fill="none" stroke-width=".8">
        ${[[444.7, 222.3, 452, 228.7], [444.7, 272.7, 452, 266], [444.7, 564.3, 468.7, 587.7], [444.7, 659.3, 468, 637.3], [633, 587.7, 645.7, 575.7], [683, 583.3, 687.7, 587.7], [627, 631.3, 633.7, 637.3], [683, 637.3, 690.3, 631.3], [936.7, 228.3, 943.3, 222.7], [980.7, 222.7, 987.3, 228.7], [936.7, 266, 943.3, 272.7], [980.7, 272.7, 987.3, 266], [940, 433.3, 943.3, 430], [980.7, 430, 989.3, 438.7], [940, 493.3, 943.3, 496], [980, 498.3, 989.3, 488.3]].map((a) => seg(a[0], a[1], a[2], a[3]))}
      </g>
      <g shape-rendering="crispEdges">
        <rect x="445" y="229" width="959" height="37" fill="#57ff57"/>
        <rect x="646" y="172" width="37" height="466" fill="#57ff57"/>
        <rect x="445" y="594" width="536" height="37" fill="#57ff57"/>
        <rect x="934" y="445" width="470" height="37" fill="#57ff57"/>
        ${hl(229.5, 452, 646, "#2fa88c", D)}${hl(229.5, 683, 1404, "#2fa88c", D)}${hl(265.5, 445, 646, "#2fa88c", D)}${hl(265.5, 683, 1404, "#2fa88c", D)}
        ${hl(594.5, 480, 646, "#2fa88c", D)}${hl(594.5, 683, 981, "#2fa88c", D)}${hl(445.5, 1000, 1404, "#2fa88c", D)}${hl(481.5, 1000, 1404, "#2fa88c", D)}
        ${vl(645.5, 266, 594, TEAL, D)}${hl(637.5, 640, 683, TEAL)}
      </g>
      <g shape-rendering="crispEdges" fill="none">
        ${vl(440.5, 134, 743, RD)}${vl(671.5, 134, 635, RD)}${vl(962.5, 134, 743, RD)}
        ${hl(247.5, 367, 445, "#8a1010")}${hl(247.5, 445, 1404, "#7a3a18")}
        ${hl(463.5, 367, 645, RD)}${hl(463.5, 645, 683, "#c8781c")}${hl(463.5, 683, 934, RD)}${hl(463.5, 934, 1404, "#c8701c")}
        ${hl(627.5, 367, 396, RD)}${hl(627.5, 445, 700, "#40180c")}
        ${hl(463.5, 380, 440, GD)}
        ${hl(376.5, 635, 646, GD)}${hl(376.5, 661, 694, GD)}
        ${vl(775.5, 463, 628, GD)}${vl(877.5, 583, 594, GD)}${vl(877.5, 616, 642, GD)}
      </g>
      <g fill="none" stroke-width=".9">
        ${seg(760, 447, 792, 479, GD)}${seg(761, 612, 792, 643, GD)}
        ${seg(640, 380, 644, 376, "#eee")}${seg(684, 377, 688, 372, "#eee")}${seg(873, 588, 877, 593, "#eee")}${seg(879, 631, 884, 636, "#eee")}
      </g>
      <g fill="none" stroke="#2a8a2a" stroke-dasharray="3 .6">
        <circle cx="442" cy="146" r="12.500"/><circle cx="671.500" cy="146" r="12.500"/><circle cx="962.500" cy="146" r="12.500"/><circle cx="380" cy="463" r="13"/>
      </g>
      ${ht("1-1", 430, 151, 16, "#e8e8e8")}${ht("1-2", 660, 151, 16, "#e8e8e8")}${ht("1-3", 951, 151, 16, "#e8e8e8")}
      ${ht("1", 369, 468, 16, "#e8e8e8")}${ht("M", 387, 468, 16, "#e8e8e8")}
      ${ht("150", 691, 351, 19, "#e6e6e6")}
      ${vt("2200", 781, 558, 15, "#cfcfcf")}${vt("50", 853, 669, 17, "#dcdcdc")}
      <polyline points=${redA} fill="none" stroke="#c81414" stroke-width="1"/>
      <polyline points=${redB} fill="none" stroke="#c81414" stroke-width="1"/>
      <rect x="420.500" y="706" width="3" height="37" fill="#20e020"/><path d="M422 697l-4 10h8z" fill="#20e020"/>
      ${ht("Y", 431, 708, 11, "#20c020")}
      <path d="M459 726l9 9M468 726l-9 9" stroke="#d02020"/><path d="M409 742h13" stroke="#3050d0"/>
    </svg>`;
  }

  render() {
    return html`
      <div class="title">广联达BIM土建算量软件 GCL2013 - [C:\\Users\\Administrator\\Desktop\\新区医院土建算量\\门急诊医技楼.GCL10]</div>
      <div class="menu">
        <div class="mleft">
          ${menus.map((m) => html`<span class="mi">${m}</span>`)}
          <span class="mi">${ic("change")}<span>新建变更</span></span>
          <span class="mi x">${ic("ai")}<span>广小二</span></span>
        </div>
        <div class="mtip">如何将图元从这个区域..</div>
        <div class="muser">${ic("user")}<span class="t">188304199@qq.com</span></div>
      </div>
      <div class="row r1">
        <div class="ga">${rowA.map((x) => this.item(x))}</div>
        <div class="gb">${rowB.map((x) => this.item(x))}</div>
      </div>
      <div class="main">
        <div class="nav">
          <div class="nh"><span>块导航栏</span>${this.pin()}</div>
          <div class="nb">工程设置</div>
          <div class="nb">绘图输入</div>
          <div class="nt"><span class="p"></span><span class="mn"></span></div>
          <div class="tree">${tree.map((t) => this.treeRow(t))}</div>
        </div>
        <div class="lp">
          <div class="ph"><span>构件列表</span>${this.pin()}</div>
          <div class="lt">
            <div class="b">${ic("lnew")}<span>新建</span><span class="ar"></span></div>
            <div class="b" style="margin-left:8px">${ic("lx")}</div>
            <div class="b" style="margin-left:7px">${ic("lcopy")}</div>
            <div class="b" style="margin-left:9px">${ic("filter")}<span>过滤</span><span class="ar"></span></div>
          </div>
          <div class="srch"><div class="in">搜索构件...</div>${ic("mag")}</div>
          <div class="grid lg">
            <div class="tbl">
              <div class="lh"><div class="corner"></div><div class="hname">构件名称</div></div>
              ${rowsList.map((n) => html`<div class="lr ${n === 19 ? "sel" : ""}"><div class="idx">${n}</div><div class="nm">JL${n}</div></div>`)}
            </div>
            <div class="sb"><div class="up"></div><div class="thumb th1"></div><div class="spacer"></div><div class="down"></div></div>
          </div>
          <div class="ph ph2"><span>属性编辑框</span>${this.pin()}</div>
          <div class="grid pg">
            <div class="tbl">
              <div class="ph3"><div class="pn">属性名称</div><div class="pv">属性值</div></div>
              ${props.map((p, i) => html`<div class="prow ${p[2] === "b" ? "b2" : p[2] === "g" ? "g2" : ""} ${i === 0 ? "first" : ""}"><div class="a">${p[0]}</div><div class="v">${p[1]}</div></div>`)}
            </div>
            <div class="sb"><div class="up"></div><div class="thumb th2"></div></div>
          </div>
        </div>
        <div class="right">
          <div class="row r2"><div class="tb">${row2.map((x) => this.item(x))}</div></div>
          <div class="row r3">
            <div class="tb">${row3.map((x) => this.item(x))}</div>
            <div class="tb tb2"><div class="grip"></div><div class="b g" style="margin-left:4px">${ic("model")}<span>从模型提取工程量</span></div></div>
          </div>
          <div class="canvas">
            <div class="strip">
              ${strip.map((s) =>
                s.i
                  ? html`<div class="sitem" style="margin-top:${s.m}px">${ic(s.i)}
                      ${s.t ? html`<div class="vtxt" style="margin-top:${s.tm ?? 0}px">${s.t}</div>` : ""}
                      ${s.arrow ? html`<div class="sar" style="margin-top:${s.am ?? 0}px"></div>` : ""}
                    </div>`
                  : html`<div class="sline" style="margin-top:${s.m}px"></div>`,
              )}
            </div>
            <div class="cv">${this.canvas()}</div>
          </div>
        </div>
      </div>
      <svg class="cursor" viewBox="0 0 12 20"><path d="M.5 .5v15l3.500-3.500 2.500 6 2.500-1-2.500-6h5z" fill="#fff" stroke="#000"/></svg>
    `;
  }
}
